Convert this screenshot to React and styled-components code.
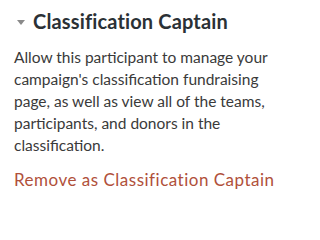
import React from "react";
import { styled, createGlobalStyle } from "styled-components";

const GlobalStyle = createGlobalStyle`
  body {
    margin: 0;
    background: #fff;
    font-family: "Lato", "Open Sans", sans-serif;
  }
`;

const Panel = styled.div`
  width: 294px;
  height: 202px;
  padding: 8px 14px 0 14px;
  box-sizing: border-box;
`;

const Header = styled.div`
  display: flex;
  align-items: center;
  gap: 8px;
  padding-left: 3px;
  color: #2b3136;
`;

const Caret = styled.span`
  width: 0;
  height: 0;
  border-left: 4.5px solid transparent;
  border-right: 4.5px solid transparent;
  border-top: 5px solid #8a8a8a;
  margin-top: 2px;
`;

const Title = styled.h3`
  margin: 0;
  font-size: 20px;
  font-weight: 700;
  line-height: 26px;
  letter-spacing: 0.15px;
`;

const Text = styled.p`
  margin: 12px 0 0 0;
  font-size: 15.5px;
  line-height: 22px;
  color: #3a3a3a;
`;

const RemoveLink = styled.a`
  display: block;
  margin-top: 13px;
  font-size: 17px;
  line-height: 22px;
  letter-spacing: 0.5px;
  color: #b0503a;
  cursor: pointer;
`;

export default function App() {
  return (
    <>
      <GlobalStyle />
      <Panel>
        <Header>
          <Caret />
          <Title>Classification Captain</Title>
        </Header>
        <Text>
          Allow this participant to manage your campaign's classification
          fundraising page, as well as view all of the teams, participants,
          and donors in the classification.
        </Text>
        <RemoveLink>Remove as Classification Captain</RemoveLink>
      </Panel>
    </>
  );
}
